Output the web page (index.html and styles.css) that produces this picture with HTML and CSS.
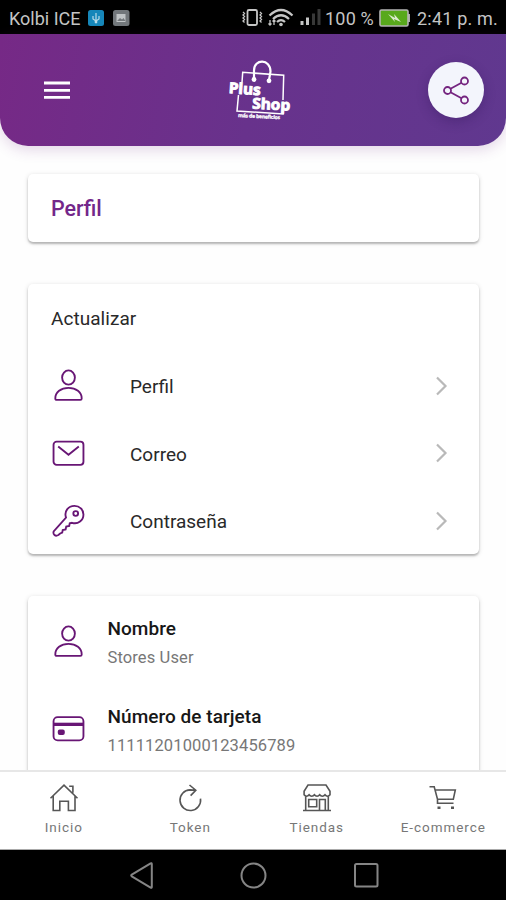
FILE: index.html
```html
<!DOCTYPE html>
<html lang="es">
<head>
<meta charset="utf-8">
<title>Perfil</title>
<link rel="stylesheet" href="styles.css">
</head>
<body>
<svg class="defs" aria-hidden="true">
  <symbol id="person" viewBox="0 0 32 32"><ellipse cx="16" cy="8.3" rx="6.2" ry="6.9"/><path d="M3.2 28.5c0-6 5.4-10.2 12.8-10.2s12.8 4.200 12.800 10.200c0 1-.5 1.400-1.300 1.400h-23c-.8 0-1.300-.4-1.300-1.400Z"/></symbol>
  <symbol id="chevron" viewBox="0 0 12 20"><path d="M1.500 1.500 10 10l-8.500 8.500"/></symbol>
</svg>
<div class="phone">
  <div class="status">
    <span class="carrier">Kolbi ICE</span>
    <svg class="badges" width="42" height="16" viewBox="0 0 42 16"><rect width="16" height="16" rx="2.500" fill="#1686b9"/><path d="M8 3v10M5 6v3l3 2 3-2V6" stroke="#b9dbe8" stroke-width="1.200" fill="none"/><circle cx="8" cy="12" r="1.400" fill="#b9dbe8"/><rect x="25" width="16.500" height="16" rx="2.500" fill="#72777b"/><path d="M28.500 4h9v8h-9z" fill="#c0c4c6"/><path d="m29 11 3-3 2 1.500L35.500 8l2 3z" fill="#72777b"/></svg>
    <svg class="signals" width="80" height="20" viewBox="0 0 80 20" fill="none" stroke="#c6c6c6"><rect x="5.500" y="2" width="9.500" height="15" rx="1.500" stroke-width="1.800"/><path d="m1 4 1.500 1.500L1 7l1.500 1.500L1 10l1.500 1.500L1 13l1.500 1.500M18 4l1.500 1.500L18 7l1.500 1.500L18 10l1.500 1.500L18 13l1.500 1.500" stroke-width="1.300"/><path d="M27.500 7.500Q39 -3.500 50.500 7.500M31 11q8-7.500 16 0M35 14q4-3.800 8 0" stroke-width="2.200"/><circle cx="39" cy="16.500" r="1.800" fill="#c6c6c6" stroke="none"/><path d="M28 12v5m-1.500-1.500L28 17l1.500-1.500M32 17v-5m-1.500 1.500L32 12l1.500 1.500" stroke-width="1.300"/><path d="M60 13v4M65.500 9.500V17" stroke-width="3"/><path d="M71.500 5.500V17M77 1v16" stroke="#383838" stroke-width="3"/></svg>
    <span class="percent">100 %</span>
    <svg class="battery" width="32" height="18" viewBox="0 0 32 18"><path d="M29 5h2v8h-2z" fill="#aaa"/><rect x="1" y="1" width="28" height="16" rx="1.500" fill="#58a91c" stroke="#b5b5b5" stroke-width="1.600"/><path d="m9 5 7 4-1-4 7 8-7-3 1 3z" fill="#ddebd0"/></svg>
    <span class="clock">2:41 p. m.</span>
  </div>
  <header class="header">
    <svg class="menu" width="26" height="20" viewBox="0 0 26 20" stroke="#fff" stroke-width="2.800"><path d="M0 3h26M0 10.300h26M0 17.400h26"/></svg>
    <svg class="logo" width="68" height="64" viewBox="0 0 68 64"><g fill="none" stroke="#fff"><path d="M16 24.500l.7-10.200 41 3L57 42M12.500 37 11 53l46 3v-3" stroke-width="1.500"/><path d="M28 21V12.500c0-12 16.500-12 16.500 1L43 22" stroke-width="2.200"/></g><circle cx="28" cy="21.500" r="2.400" fill="#fff"/><circle cx="43" cy="22.800" r="2.400" fill="#fff"/><g class="wordmark"><text x="2.500" y="35" textLength="32" lengthAdjust="spacingAndGlyphs" transform="rotate(4 2 35)">Plus</text><text x="26" y="50.500" textLength="38" lengthAdjust="spacingAndGlyphs" transform="rotate(3 26 50)">Shop</text><text class="tagline" x="12" y="59" textLength="42" transform="rotate(3 12 59)">más de beneficios</text></g></svg>
    <div class="share"><svg width="28" height="30" viewBox="0 0 28 30" fill="none" stroke="#74247f" stroke-width="1.800"><circle cx="5.500" cy="15.500" r="3.500"/><circle cx="22.500" cy="6" r="3.500"/><circle cx="22.500" cy="25" r="3.500"/><path d="m8.500 13.800 11-6M8.500 17.200l11 6"/></svg></div>
  </header>
  <main class="content">
    <section class="card heading">Perfil</section>
    <section class="card actions">
      <h2 class="title">Actualizar</h2>
      <div class="row"><svg class="icon"><use href="#person"/></svg><span>Perfil</span><svg class="chevron"><use href="#chevron"/></svg></div>
      <div class="row"><svg class="icon" viewBox="0 0 32 32"><rect x="1.500" y="4.500" width="29" height="22.500" rx="3"/><path d="m6 9.300 10 7.900 10-7.900"/></svg><span>Correo</span><svg class="chevron"><use href="#chevron"/></svg></div>
      <div class="row"><svg class="icon" viewBox="0 0 32 32"><path d="M13.600 13.200C11.500 7 15.800 1.800 21.800 1.800c5 0 8.700 3.700 8.700 8.300 0 5.800-5.200 9.900-11.100 8.100l-2.200.4-.5 2.700-2.900.5-.6 2.900-2.800.5-.5 2.600-2 .8-1.700 1.500c-3 1.800-5.500-.6-4.600-3.500Z"/><circle cx="23" cy="9.200" r="2.300"/></svg><span>Contraseña</span><svg class="chevron"><use href="#chevron"/></svg></div>
    </section>
    <section class="card details">
      <div class="detail"><svg class="icon"><use href="#person"/></svg><div><h3>Nombre</h3><p>Stores User</p></div></div>
      <div class="detail"><svg class="icon" viewBox="0 0 32 32"><rect x="1.500" y="4" width="29" height="22.500" rx="4"/><path d="M1.500 11h29" stroke-width="3.200"/><rect x="6.500" y="17" width="5" height="3.500" rx="1" fill="#681675"/></svg><div><h3>Número de tarjeta</h3><p>11111201000123456789</p></div></div>
    </section>
  </main>
  <nav class="tabs">
    <div class="tab"><svg viewBox="0 0 30 30"><path d="M1.500 15.300 15 2.200l13.500 13.100M4.200 13v14.500h6.600V18.200h8.600v9.300h6.600V13M20.200 3.300h3.700v6.500"/></svg><span>Inicio</span></div>
    <div class="tab"><svg viewBox="0 0 30 30"><path d="M20.500 7.200 15 6.900a10.300 10.300 0 1 0 10.500 8.800M14.500 2l6.300 5.200-5.200 5.400"/></svg><span>Token</span></div>
    <div class="tab"><svg viewBox="0 0 30 30"><path d="M6 2h18l4 6.300v3.500c-1.300 1.900-3.700 1.900-5 0-1.300 1.900-4 1.900-5.300 0-1.300 1.900-4 1.900-5.300 0-1.300 1.900-4 1.900-5.300 0-1.300 1.900-3.700 1.900-5 0V8.300ZM1 27.500h28M3.700 13.500v14M26.300 13.500v14M6.700 16.500h8v7.300h-8zM17.500 27V16.500h5.800V27"/></svg><span>Tiendas</span></div>
    <div class="tab"><svg viewBox="0 0 30 30"><path d="M1.500 3.700h4.700l3.300 12.600h15.800l2-9.300H7.200M9.500 16.300v4h16"/><path d="M11 23.500v2.500M24.500 23.500v2.500" stroke-width="3"/></svg><span>E-commerce</span></div>
  </nav>
  <div class="system"><svg width="506" height="50" viewBox="0 0 506 50" fill="none" stroke="#858585" stroke-width="2"><path d="M151.800 14v23q0 1.300-1.200.6l-18.800-11.300q-1.200-.8 0-1.600l18.800-11.300q1.200-.7 1.200.6Z"/><circle cx="253.500" cy="25.500" r="12"/><rect x="355" y="14" width="22.500" height="22.500" rx="1.500"/></svg></div>
</div>
</body>
</html>
```
FILE: styles.css
```css
* { box-sizing: border-box; }
body { margin: 0; font-family: Roboto, "Noto Sans", sans-serif; background: #fefefe; }
.defs { display: none; }
.phone { width: 506px; height: 900px; display: flex; flex-direction: column; overflow: hidden; }
.status { flex: none; height: 34px; background: #000; color: #c4c4c4; display: flex; align-items: center; padding: 2px 7px 0 9px; font-size: 18px; white-space: nowrap; }
.carrier { width: 79px; }
.signals { margin-left: 112px; }
.percent { margin-left: 3px; width: 51px; letter-spacing: .2px; }
.battery { margin-left: 3px; }
.clock { margin-left: 6px; letter-spacing: .2px; }
.header { position: relative; flex: none; height: 112px; padding: 0 22px 0 44px; display: flex; align-items: center; border-radius: 0 0 28px 28px; background: linear-gradient(100deg, #762986, #68328c 50%, #60388f); box-shadow: 0 4px 14px #71288630; }
.logo { margin-left: 156px; margin-right: auto; }
.wordmark { font: 700 15px "Open Sans", sans-serif; fill: #fff; stroke: #fff; stroke-width: .9px; }
.tagline { font-size: 5px; stroke-width: .3px; }
.share { width: 56px; height: 56px; border-radius: 50%; background: #f3f5fc; display: grid; place-items: center; box-shadow: 0 4px 12px #31165755; }
.content { flex: 1; min-height: 0; padding: 28px 27px 0 28px; display: flex; flex-direction: column; gap: 42px; overflow: hidden; }
.card { flex: none; background: #fff; border-radius: 5px; box-shadow: 0 2px 2px #00000038, 0 1px 5px #00000024; }
.heading { height: 68px; padding: 0 23px; line-height: 70px; font-size: 21.500px; font-weight: 500; color: #73278a; }
.actions { height: 270px; padding: 0 23px; color: #292929; font-size: 19px; }
.title { margin: 0; height: 68px; line-height: 70px; font-size: 19px; font-weight: 400; letter-spacing: .05px; }
.row { height: 67.500px; display: flex; align-items: center; }
.row span { margin-left: 46px; padding-top: 1.500px; }
.icon { flex: none; width: 33px; height: 33px; margin-left: .5px; margin-right: -.5px; fill: none; stroke: #681675; stroke-width: 1.800; }
.chevron { width: 13px; height: 20px; margin-left: auto; margin-right: 8px; fill: none; stroke: #b9b9b9; stroke-width: 2.200; }
.details { height: 260px; padding: 19px 23px; }
.detail { height: 88px; display: flex; align-items: flex-start; gap: 23.500px; }
.detail .icon { margin-top: 10px; }
.detail h3, .detail p { margin: 0; white-space: nowrap; }
.detail h3 { font-size: 19px; line-height: 28px; font-weight: 500; color: #171717; letter-spacing: .05px; }
.detail p { font-size: 16.500px; line-height: 29px; color: #777; letter-spacing: .12px; }
.tabs { position: relative; flex: none; height: 80px; background: #fff; border-top: 2px solid #e7e7e7; border-bottom: 1px solid #aaa; display: grid; grid-template-columns: repeat(4, 1fr); }
.tab { display: flex; flex-direction: column; align-items: center; padding: 11px 0 0 1px; color: #777; font-size: 13.500px; line-height: 29px; letter-spacing: .95px; }
.tab svg { width: 30px; height: 30px; fill: none; stroke: #565656; stroke-width: 1.600; }
.system { flex: none; height: 50px; background: #000; }
.system svg { display: block; }
```
